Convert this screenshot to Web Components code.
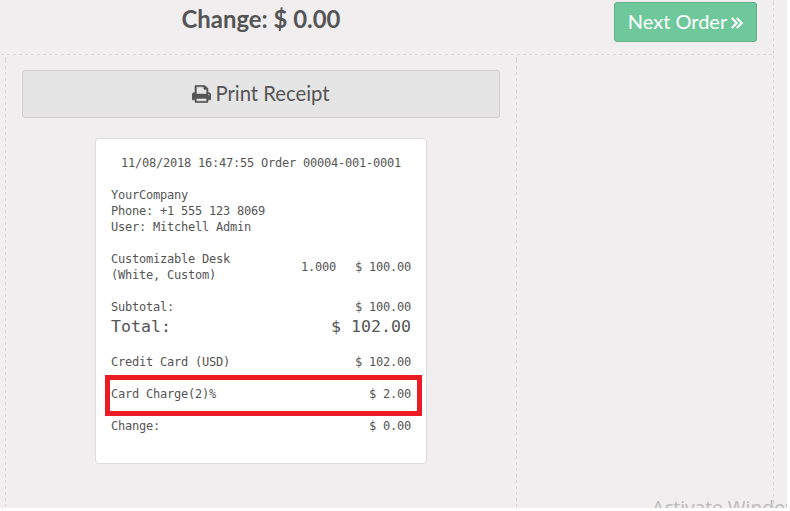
<!DOCTYPE html>
<html lang="en"><head><meta charset="utf-8"><title>Receipt</title>
<style>html,body{margin:0;background:#fff;overflow:hidden}</style></head>
<body>
<pos-screen>
  <pos-top slot="top"></pos-top>
  <pos-button slot="main"></pos-button>
  <pos-receipt slot="main">
    <span slot="title">11/08/2018 16:47:55 Order 00004-001-0001</span>
    <div slot="info">YourCompany<br>Phone: +1 555 123 8069<br>User: Mitchell Admin</div>
    <receipt-row class="item" qty="1.000" amount="$ 100.00">Customizable Desk<br>(White, Custom)</receipt-row>
    <receipt-row class="sub" amount="$ 100.00">Subtotal:</receipt-row>
    <receipt-row big amount="$ 102.00">Total:</receipt-row>
    <receipt-row class="pay" amount="$ 102.00">Credit Card (USD)</receipt-row>
    <receipt-row class="gap" marked amount="$ 2.00">Card Charge(2)%</receipt-row>
    <receipt-row class="gap" amount="$ 0.00">Change:</receipt-row>
  </pos-receipt>
</pos-screen>
<script>
const define = (name, html) => customElements.define(name, class extends HTMLElement {
  constructor() {
    super();
    const t = document.createElement('template');
    t.innerHTML = html;
    this.attachShadow({mode: 'open'}).append(t.content.cloneNode(true));
    const qty = this.shadowRoot.querySelector('.qty');
    if (qty) {
      qty.textContent = this.getAttribute('qty') || '';
      this.shadowRoot.querySelector('.amount').textContent = this.getAttribute('amount');
    }
  }
});
define('receipt-row', `<style>
  :host{display:flex;align-items:center;position:relative;line-height:16px}
  .label{flex:1}.qty{margin-right:19px}
  .qty:empty{display:none}
  :host([big]){font-size:16.6px;letter-spacing:0;line-height:23px}
  :host([marked])::after{content:"";position:absolute;left:-6px;right:-11px;top:-11px;height:31px;border:5px solid #ed1c24}
  span{white-space:nowrap}
</style><span class="label"><slot></slot></span><span class="qty"></span><span class="amount"></span>`);
define('pos-receipt', `<style>
  :host{display:block;box-sizing:border-box;width:332px;height:326px;margin:20px auto 0;padding:16px 15px;background:#fff;border:1px solid #dcdcdc;border-radius:4px;font:12px/16px "DejaVu Sans Mono",monospace;letter-spacing:-.224px;color:#555}
  .title{text-align:center;margin-bottom:16px}
  ::slotted(.item){margin-top:16px}
  ::slotted(.sub),::slotted(.gap){margin-top:16px}
  ::slotted(.pay){margin-top:16px}
</style><div class="title"><slot name="title"></slot></div><slot name="info"></slot><slot></slot>`);
define('pos-button', `<style>
  :host{display:flex;box-sizing:border-box;height:48px;padding-bottom:2px;align-items:center;justify-content:center;gap:4px;background:#e5e5e5;border:1px solid #d0cecf;border-radius:3px;font:20.3px/26px Lato,sans-serif;color:#555}
  svg{width:19px;height:18px;margin-top:2px}
</style><svg viewBox="0 0 1664 1536"><path fill="#555" stroke="#555" stroke-width="40" fill-rule="evenodd" d="M384 1408h896v-256h-896zM384 768h896v-384h-160q-40 0-68-28t-28-68v-160h-640zM1536 832q0-26-19-45t-45-19-45 19-19 45 19 45 45 19 45-19 19-45zM1664 832v416q0 13-9.5 22.5t-22.5 9.5h-224v160q0 40-28 68t-68 28h-960q-40 0-68-28t-28-68v-160h-224q-13 0-22.5-9.5t-9.5-22.5v-416q0-79 56.5-135.5t135.5-56.5h64v-544q0-40 28-68t68-28h672q40 0 88 20t76 48l152 152q28 28 48 76t20 88v256h64q79 0 135.5 56.5t56.5 135.5z"/></svg><span>Print Receipt</span>`);
define('pos-top', `<style>
  :host{display:grid;grid-template-columns:5px 511px 1fr;height:54px;font:20px/26px Lato,sans-serif;color:#555}
  h1{margin:3px 0 0 1px;font-size:23.9px;line-height:32px;font-weight:700;text-align:center;grid-column:2}
  .next{justify-self:end;box-sizing:border-box;margin:2px 16px 0 0;width:143px;height:40px;padding-bottom:2px;display:flex;align-items:center;justify-content:center;gap:4px;background:#6ec89b;border:1px solid #64af8a;border-radius:3px;color:#fff}
  svg{width:12px;height:14px;margin-top:3px}
</style><h1>Change: $ 0.00</h1><div class="next"><span>Next Order</span><svg viewBox="0 0 12 14"><path d="M.8 2 5.6 7 .8 12M5.8 2 10.6 7 5.8 12" fill="none" stroke="#fff" stroke-width="2.2"/></svg></div>`);
define('pos-screen', `<style>
  :host{display:grid;grid-template-columns:773px 14px;width:787px;height:508px;background:#f0eeef;overflow:hidden;position:relative}
  .work{display:grid;grid-template-rows:54px 1px 453px}
  .v{width:1px;background:repeating-linear-gradient(#d8d6d7 0 3px,transparent 3px 6px) 0 2px}
  .body .v{background-position:0 5px}
  .h{background:repeating-linear-gradient(90deg,#d8d6d7 0 3px,transparent 3px 6px) 1px 0}
  .body{display:grid;grid-template-columns:5px 1px 510px 1px 1fr}
  main{padding:15px 16px}
  .wm{position:absolute;left:652px;top:494px;font:19.2px/28px "Open Sans",sans-serif;color:#bcbabb;white-space:nowrap}
</style><div class="work"><slot name="top"></slot><div class="h"></div><div class="body"><i></i><div class="v"></div><main><slot name="main"></slot></main><div class="v"></div></div></div><div class="v"></div><div class="wm">Activate Windows</div>`);
</script>
</body></html>
